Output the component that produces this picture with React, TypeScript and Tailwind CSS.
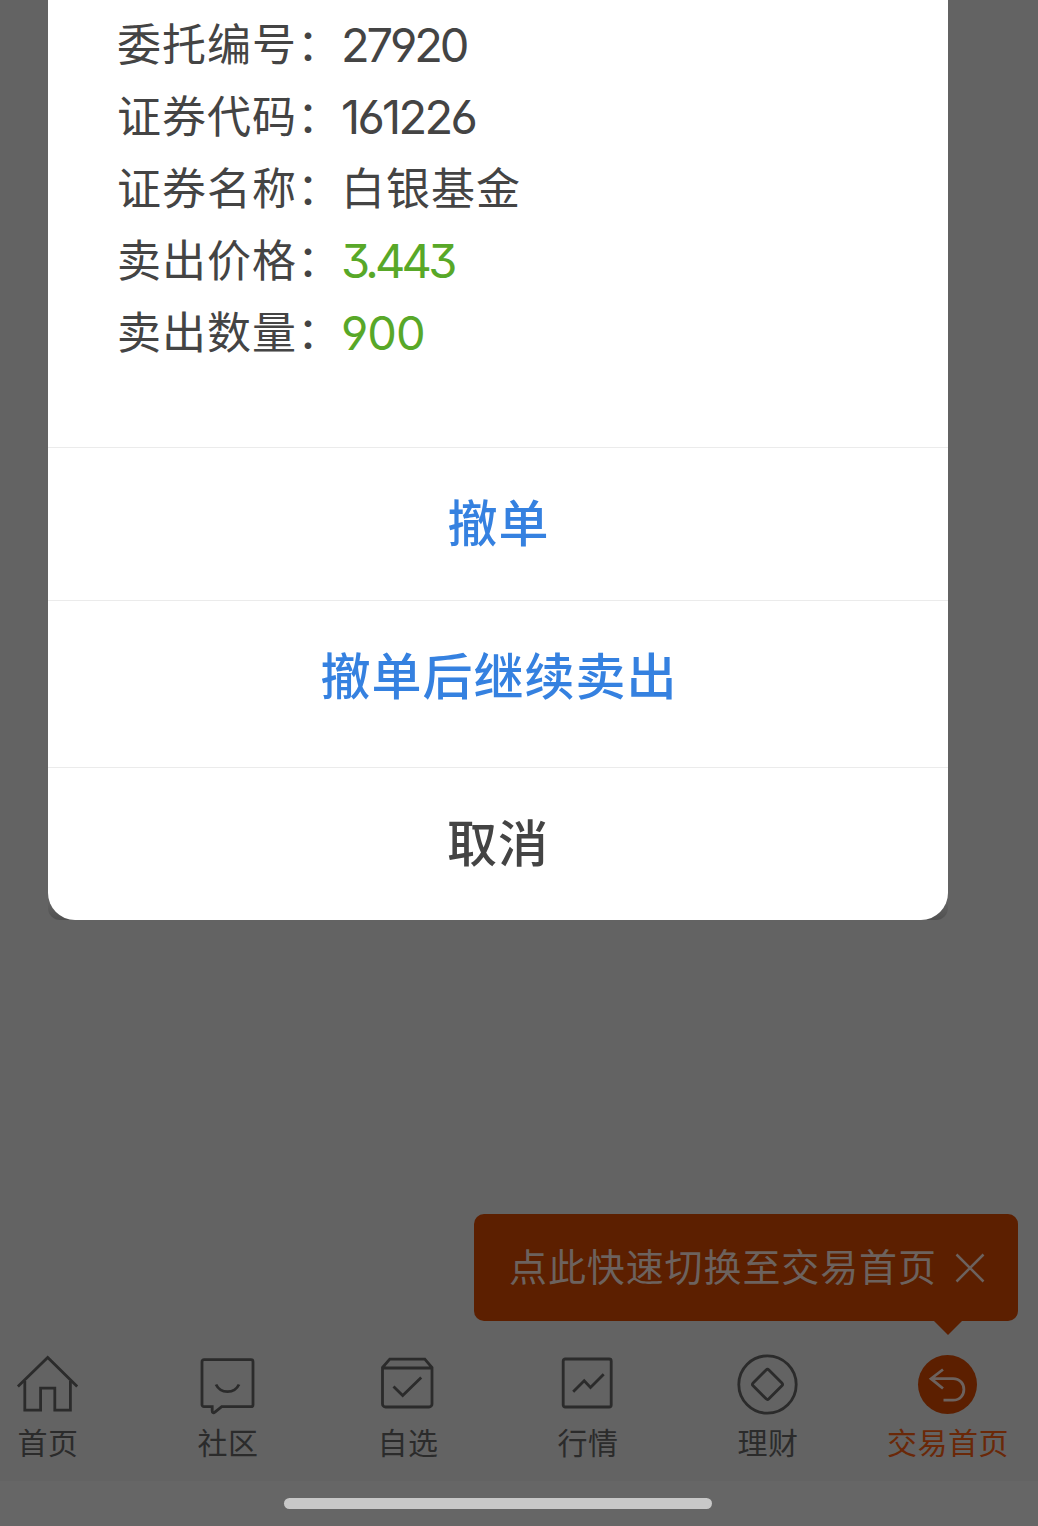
import type { ReactNode } from 'react';
import clsx from 'clsx';

interface OrderField {
  label: string;
  value: string;
  valueClass: string;
}

// Open six and nine, flat-top three
const NUM =
  "relative top-px font-['Inter','Noto_Sans_CJK_SC',sans-serif] text-[47px] [font-feature-settings:'cv03','cv04','cv09']";

const fields: OrderField[] = [
  { label: '委托编号：', value: '27920', valueClass: `${NUM} tracking-[-3.1px] text-[#444]` },
  { label: '证券代码：', value: '161226', valueClass: `${NUM} tracking-[-2.7px] text-[#444]` },
  { label: '证券名称：', value: '白银基金', valueClass: 'relative -top-0.5 text-[44px] tracking-[1px] text-[#444]' },
  { label: '卖出价格：', value: '3.443', valueClass: `${NUM} tracking-[-3.8px] text-[#58a828]` },
  { label: '卖出数量：', value: '900', valueClass: `${NUM} tracking-[-1px] text-[#58a828]` },
];

interface NavItem {
  label: string;
  icon: ReactNode;
  active?: boolean;
}

const navItems: NavItem[] = [
  {
    label: '首页',
    icon: (
      <>
        <path d="M2.2 34.500 32 5.500l29.500 29" transform="translate(-.3 0)" />
        <path d="M8.800 29v29.200h15.800v-22h14.200v22h15.600V29" />
      </>
    ),
  },
  {
    label: '社区',
    icon: (
      <>
        <path d="M8 7.700h47a2 2 0 0 1 2 2v43a2 2 0 0 1-2 2H25.700l-6.500 5.200c-1.800 1.400-3 1.200-3-1v-4.200H8a2 2 0 0 1-2-2v-43a2 2 0 0 1 2-2z" />
        <path d="M20 32.500c4.500 9.500 18.500 9.500 23 0" />
      </>
    ),
  },
  {
    label: '自选',
    icon: (
      <>
        <path d="M6.500 15.500 13.800 7.200h35L56 15.500V52a3 3 0 0 1-3 3H9.500a3 3 0 0 1-3-3V15.500zM6.500 16h49.500" />
        <path d="m17.500 34.500 9.200 9L45.200 25.500" />
      </>
    ),
  },
  {
    label: '行情',
    icon: (
      <>
        <rect x="7.200" y="7" width="48" height="48" rx="2" />
        <path d="m17.200 39.700 11-11 6.300 6.700L47.700 22.200" />
      </>
    ),
  },
  {
    label: '理财',
    icon: (
      <>
        <circle cx="31.500" cy="32.500" r="28.700" />
        <path d="M30.100 18a2 2 0 0 1 2.800 0l13 13a2 2 0 0 1 0 2.800l-13 13a2 2 0 0 1-2.800 0l-13-13a2 2 0 0 1 0-2.800z" />
      </>
    ),
  },
  {
    label: '交易首页',
    active: true,
    icon: (
      <>
        <circle cx="31.500" cy="32.500" r="29.500" fill="#5c1f00" stroke="none" />
        <path d="M27 17.500 15 26.700l12 9.800M15 26.700h22c14.500 0 14.500 21.500 0 21.500H27.500" stroke="#6c625e" />
      </>
    ),
  },
];

function OrderDialog() {
  return (
    <div className="mx-[90px] h-[920px] rounded-b-[12px] bg-linear-to-b from-[#636363] from-98% to-[#505050]">
      <div className="flex h-full flex-col rounded-b-[27px] bg-white">
        <div className="flex h-[447px] flex-col pt-2 pl-[69px]">
          {fields.map((f) => (
            <div key={f.label} className="flex h-[72px] items-center whitespace-nowrap">
              <span className="relative -top-0.5 w-[224px] text-[44px] leading-[72px] tracking-[1px] text-[#444]">
                {f.label}
              </span>
              <span className={clsx('leading-[72px]', f.valueClass)}>{f.value}</span>
            </div>
          ))}
        </div>
        <button className="h-[153px] border-t border-[#ebebeb] pb-[7px] pl-px text-[50px] leading-[145px] font-medium tracking-[1px] text-[#3581e0]">
          撤单
        </button>
        <button className="h-[167px] border-t border-[#ebebeb] pb-[21px] pl-0.5 text-[50px] leading-[145px] font-medium tracking-[1px] text-[#3581e0]">
          撤单后继续卖出
        </button>
        <button className="h-[153px] border-t border-[#ebebeb] pb-[7px] text-[50px] leading-[145px] font-medium tracking-[1px] text-[#444]">
          取消
        </button>
      </div>
    </div>
  );
}

function SwitchTip() {
  return (
    <div className="relative mt-[294px] mr-5 ml-auto flex h-[107px] w-[544px] items-center rounded-[10px] bg-[#5c1f00] pl-[35px] text-[#6c625e]">
      <span className="pb-1.5 text-[38px] leading-[56px] tracking-[0.9px] whitespace-nowrap">点此快速切换至交易首页</span>
      <svg className="ml-[18px] size-[30px]" viewBox="0 0 30 30" fill="none" stroke="currentColor" strokeWidth="2.500">
        <path d="m1.500 1.500 27 27M28.500 1.500l-27 27" />
      </svg>
      {/* Pointer towards the trade tab */}
      <svg className="absolute top-full right-[56px] h-[14px] w-7" viewBox="0 0 28 14">
        <path d="M0 0h28L14 14z" fill="#5c1f00" />
      </svg>
    </div>
  );
}

export default function App() {
  return (
    <div className="h-[1526px] w-[1038px] overflow-hidden bg-[#636363] font-['Noto_Sans_CJK_SC',sans-serif]">
      <div className="-ml-[42px] flex h-full w-[1080px] flex-col">
        <OrderDialog />
        <SwitchTip />
        <nav className="mt-[31px] grid h-[129px] grid-cols-6">
          {navItems.map((item) => (
            <div
              key={item.label}
              className={clsx('flex flex-col items-center', item.active ? 'text-[#6a2808]' : 'text-[#2b2b2b]')}
            >
              <svg className="size-16" viewBox="0 0 64 64" fill="none" stroke="currentColor" strokeWidth="2.800">
                {item.icon}
              </svg>
              <span className="text-[30px] leading-[51px] tracking-[0.5px] whitespace-nowrap">{item.label}</span>
            </div>
          ))}
        </nav>
        <div className="flex flex-1 justify-center bg-[#666] pt-[17px]">
          <div className="h-[11px] w-[428px] rounded-full bg-[#c8c8c8]" />
        </div>
      </div>
    </div>
  );
}
